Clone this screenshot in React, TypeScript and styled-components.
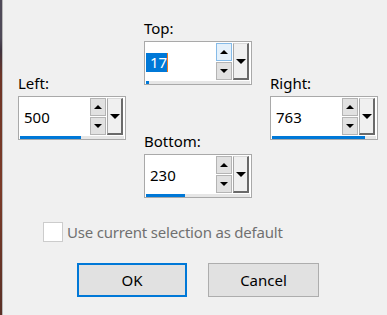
import styled, { createGlobalStyle } from 'styled-components';

const GlobalStyle = createGlobalStyle`
  html, body {
    margin: 0;
    padding: 0;
    background: #f0f0f0;
  }
  body {
    font-family: 'Noto Sans', 'Open Sans', sans-serif;
    font-size: 15px;
    color: #000;
  }
`;

const Window = styled.div`
  display: flex;
  width: 387px;
  height: 315px;
  overflow: hidden;
`;

const Edge = styled.div`
  width: 2px;
  flex: none;
  border-right: 1px solid #b9b9b9;
  background: linear-gradient(
    #4f4a58 0,
    #4f4a58 12%,
    #3f3440 16%,
    #6e3526 24%,
    #7b3b28 60%,
    #5a3026 100%
  );
`;

const Dialog = styled.div`
  flex: 1;
  display: flex;
  flex-direction: column;
`;

const Fields = styled.div`
  display: grid;
  grid-template-columns: 108px 108px 108px;
  column-gap: 18px;
  padding-left: 15px;
`;

const Column = styled.div<{ $top: number }>`
  display: flex;
  flex-direction: column;
  padding-top: ${(p) => p.$top}px;
  gap: 46px;
`;

const Group = styled.div`
  display: flex;
  flex-direction: column;
`;

const Label = styled.div`
  height: 20px;
  line-height: 20px;
  margin-bottom: 3px;
`;

const Box = styled.div`
  box-sizing: border-box;
  width: 108px;
  height: 44px;
  border: 1px solid #a9a9a9;
  background: #fff;
  display: flex;
  flex-direction: column;
  padding-top: 1px;
`;

const Row = styled.div`
  display: flex;
  height: 37px;
  padding-right: 2px;
`;

const ValueArea = styled.div`
  flex: 1;
  display: flex;
  align-items: center;
  padding-left: 5px;
  padding-top: 1px;
`;

const Value = styled.span<{ $selected?: boolean }>`
  line-height: 19px;
  ${(p) =>
    p.$selected &&
    `
    background: #0078d7;
    color: #fff;
    margin-left: -4px;
    padding-left: 4px;
    border-right: 1.5px solid #f07a22;
  `}
`;

const Spinner = styled.div`
  width: 16px;
  display: flex;
  flex-direction: column;
  gap: 1px;
  margin-right: 1px;
`;

const SpinButton = styled.div<{ $hot?: boolean }>`
  box-sizing: border-box;
  flex: 1;
  display: flex;
  align-items: center;
  justify-content: center;
  border: 1px solid ${(p) => (p.$hot ? '#86bbe8' : '#b4b4b4')};
  background: ${(p) => (p.$hot ? '#e5f1fb' : '#e1e1e1')};
`;

const DropButton = styled.div`
  box-sizing: border-box;
  width: 16px;
  display: flex;
  align-items: center;
  justify-content: center;
  background: #f0f0f0;
  border-style: solid;
  border-width: 1px 2px 2px 1px;
  border-color: #d8d8d8 #6a6a6a #6a6a6a #a8a8a8;
`;

const Track = styled.div`
  height: 3px;
  margin: 1px 1px 0;
  background: #e6e6e6;
`;

const Fill = styled.div`
  height: 100%;
  background: #0078d7;
`;

const CheckRow = styled.label`
  display: flex;
  align-items: center;
  margin: 24px 0 0 40px;
  color: #707070;
  height: 20px;
  letter-spacing: -0.2px;
`;

const CheckBox = styled.span`
  box-sizing: border-box;
  width: 20px;
  height: 20px;
  border: 1px solid #cccccc;
  background: #fff;
  margin-right: 4px;
`;

const Buttons = styled.div`
  display: flex;
  gap: 21px;
  margin: 21px 0 0 74px;
`;

const Button = styled.div<{ $default?: boolean; $width: number }>`
  box-sizing: border-box;
  width: ${(p) => p.$width}px;
  height: 34px;
  display: flex;
  align-items: center;
  justify-content: center;
  background: #e1e1e1;
  border: ${(p) => (p.$default ? '2px solid #0078d7' : '1px solid #adadad')};
`;

const Arrow = ({ up, w = 8, h = 4 }: { up?: boolean; w?: number; h?: number }) => (
  <svg width={w} height={h} viewBox={`0 0 ${w} ${h}`}>
    <polygon points={up ? `0,${h} ${w},${h} ${w / 2},0` : `0,0 ${w},0 ${w / 2},${h}`} fill="#000" />
  </svg>
);

interface FieldProps {
  label: string;
  value: number;
  max: number;
  selected?: boolean;
  hotUp?: boolean;
}

function Field({ label, value, max, selected, hotUp }: FieldProps) {
  const pct = Math.max(1.5, (value / max) * 100);
  return (
    <Group>
      <Label>{label}</Label>
      <Box>
        <Row>
          <ValueArea>
            <Value $selected={selected}>{value}</Value>
          </ValueArea>
          <Spinner>
            <SpinButton $hot={hotUp}>
              <Arrow up />
            </SpinButton>
            <SpinButton>
              <Arrow />
            </SpinButton>
          </Spinner>
          <DropButton>
            <Arrow w={10} h={5} />
          </DropButton>
        </Row>
        <Track>
          <Fill style={{ width: `${pct}%` }} />
        </Track>
      </Box>
    </Group>
  );
}

export default function App() {
  return (
    <>
      <GlobalStyle />
      <Window>
        <Edge />
        <Dialog>
          <Fields>
            <Column $top={73}>
              <Field label="Left:" value={500} max={853} />
            </Column>
            <Column $top={18}>
              <Field label="Top:" value={17} max={613} selected hotUp />
              <Field label="Bottom:" value={230} max={613} />
            </Column>
            <Column $top={73}>
              <Field label="Right:" value={763} max={853} />
            </Column>
          </Fields>
          <CheckRow>
            <CheckBox />
            Use current selection as default
          </CheckRow>
          <Buttons>
            <Button $default $width={110}>OK</Button>
            <Button $width={111}>Cancel</Button>
          </Buttons>
        </Dialog>
      </Window>
    </>
  );
}
